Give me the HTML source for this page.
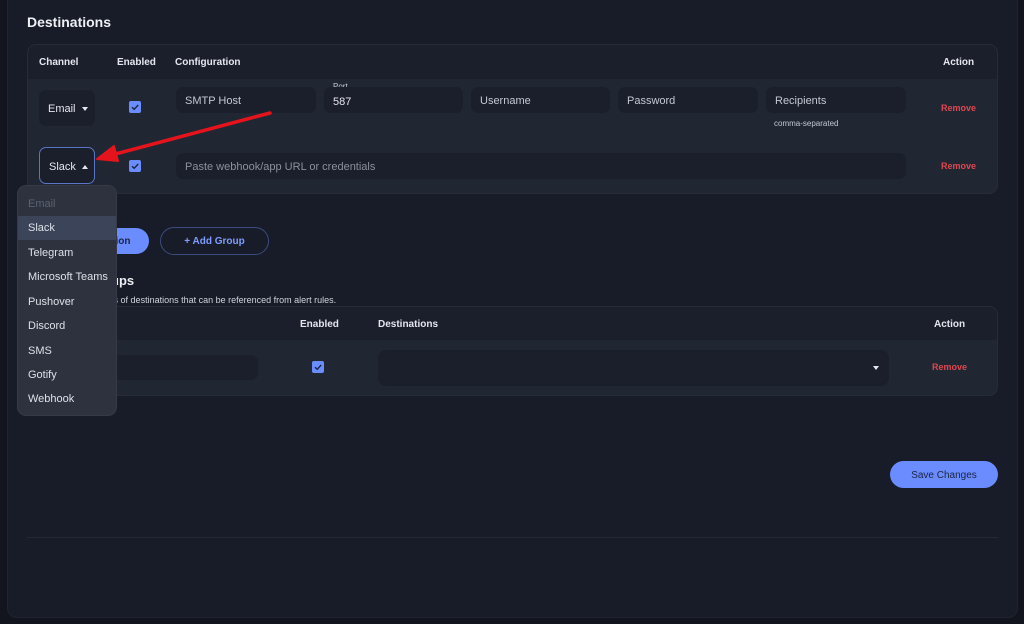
<!DOCTYPE html>
<html><head><meta charset="utf-8"><style>
*{box-sizing:border-box;margin:0;padding:0}
body{width:1024px;height:624px;background:#12151d;font-family:"Liberation Sans",sans-serif;color:#d6dae3;position:relative;overflow:hidden;font-size:11px}
.abs{position:absolute}
.panel{left:7px;top:-12px;width:1011px;height:630px;background:#181c28;border-radius:10px;border:1px solid #1f2430}
.tbl{background:#212633;border-radius:9px;border:1px solid #262b38;overflow:hidden}
.hdr{background:#1b1f2b;position:absolute;left:0;right:0;top:0}
.th{font-weight:bold;font-size:10px;color:#e4e7ee}
.inp{background:#1b1f2b;border-radius:7px;color:#c3c8d3;font-size:11px;padding-left:9px;display:flex;align-items:center;padding-top:2px}
.cb{width:12px;height:12px;background:#6a8cff;border-radius:2px}
.cb svg{display:block}
.rm{color:#e0474f;font-size:9px;font-weight:bold}
.caret{display:inline-block;width:0;height:0;border-left:3.5px solid transparent;border-right:3.5px solid transparent}
.dd{left:17px;top:185px;width:100px;height:231px;background:#2d323e;border-radius:9px;border:1px solid #353a46}
.it{position:absolute;left:0;width:100%;height:24px;line-height:24px;padding-left:10px;font-size:11px;color:#dde1e8}
</style></head><body>
<div class="abs panel"></div>
<div class="abs" style="left:27px;top:14px;font-size:14px;font-weight:bold;color:#eef0f4">Destinations</div>

<div class="abs tbl" style="left:27px;top:44px;width:971px;height:150px">
 <div class="hdr" style="height:34px"></div>
</div>
<div class="abs th" style="left:39px;top:57px">Channel</div>
<div class="abs th" style="left:117px;top:57px">Enabled</div>
<div class="abs th" style="left:175px;top:57px">Configuration</div>
<div class="abs th" style="left:943px;top:57px">Action</div>

<div class="abs inp" style="left:39px;top:90px;width:56px;height:36px;padding-left:9px;color:#e4e7ee">Email&nbsp;&nbsp;<span class="caret" style="border-top:4px solid #e4e7ee"></span></div>
<div class="abs cb" style="left:129px;top:101px"><svg width="12" height="12"><path d="M3 6.2L5.2 8.3 9.2 4" stroke="#1b2440" stroke-width="1.4" fill="none"/></svg></div>
<div class="abs inp" style="left:176px;top:87px;width:140px;height:26px">SMTP Host</div>
<div class="abs" style="left:333px;top:82px;font-size:8px;color:#c3c8d3">Port</div>
<div class="abs inp" style="left:324px;top:87px;width:139px;height:26px;align-items:flex-end;padding-bottom:5px;color:#e4e7ee">587</div>
<div class="abs inp" style="left:471px;top:87px;width:139px;height:26px">Username</div>
<div class="abs inp" style="left:618px;top:87px;width:140px;height:26px">Password</div>
<div class="abs inp" style="left:766px;top:87px;width:140px;height:26px">Recipients</div>
<div class="abs" style="left:774px;top:119px;font-size:8px;color:#c3c8d3">comma-separated</div>
<div class="abs rm" style="left:941px;top:103px">Remove</div>

<div class="abs inp" style="left:39px;top:147px;width:56px;height:37px;border:1px solid #5a75c8;background:#1b1f2b;color:#e4e7ee">Slack&nbsp;&nbsp;<span class="caret" style="border-bottom:4px solid #e4e7ee"></span></div>
<div class="abs cb" style="left:129px;top:160px"><svg width="12" height="12"><path d="M3 6.2L5.2 8.3 9.2 4" stroke="#1b2440" stroke-width="1.4" fill="none"/></svg></div>
<div class="abs inp" style="left:176px;top:153px;width:730px;height:26px;color:#8a909c">Paste webhook/app URL or credentials</div>
<div class="abs rm" style="left:941px;top:161px">Remove</div>

<div class="abs" style="left:27px;top:228px;width:122px;height:26px;background:#6a8cff;border-radius:13px;color:#1b2440;font-weight:bold;font-size:10px;line-height:27px;text-align:center">+ Add Destination</div>
<div class="abs" style="left:160px;top:227px;width:109px;height:28px;border:1px solid #3b4b80;border-radius:14px;color:#7f9cff;font-weight:bold;font-size:10px;line-height:27px;text-align:center">+ Add Group</div>

<div class="abs" style="left:33px;top:273px;font-size:13px;font-weight:bold;color:#eef0f4">Channel Groups</div>
<div class="abs" style="left:24px;top:295px;font-size:9px;color:#d0d4dc">Groups are named sets of destinations that can be referenced from alert rules.</div>

<div class="abs tbl" style="left:27px;top:306px;width:971px;height:90px">
 <div class="hdr" style="height:33px"></div>
</div>
<div class="abs th" style="left:39px;top:319px">Name</div>
<div class="abs th" style="left:300px;top:319px">Enabled</div>
<div class="abs th" style="left:378px;top:319px">Destinations</div>
<div class="abs th" style="left:934px;top:319px">Action</div>
<div class="abs inp" style="left:39px;top:355px;width:219px;height:25px"></div>
<div class="abs cb" style="left:312px;top:361px"><svg width="12" height="12"><path d="M3 6.2L5.2 8.3 9.2 4" stroke="#1b2440" stroke-width="1.4" fill="none"/></svg></div>
<div class="abs inp" style="left:378px;top:350px;width:511px;height:36px;border-radius:8px"></div>
<div class="abs caret" style="left:873px;top:366px;border-top:4px solid #e4e7ee"></div>
<div class="abs rm" style="left:932px;top:362px">Remove</div>

<div class="abs" style="left:890px;top:461px;width:108px;height:27px;background:#6a8cff;border-radius:14px;color:#1b2440;font-size:10px;line-height:29px;text-align:center">Save Changes</div>
<div class="abs" style="left:27px;top:537px;width:971px;height:1px;background:#232836"></div>

<div class="abs dd">
 <div class="it" style="top:6px;color:#5c6270">Email</div>
 <div class="it" style="top:30px;background:#3b4458">Slack</div>
 <div class="it" style="top:55px">Telegram</div>
 <div class="it" style="top:79px">Microsoft Teams</div>
 <div class="it" style="top:104px">Pushover</div>
 <div class="it" style="top:128px">Discord</div>
 <div class="it" style="top:153px">SMS</div>
 <div class="it" style="top:177px">Gotify</div>
 <div class="it" style="top:201px">Webhook</div>
</div>

<svg class="abs" style="left:0;top:0" width="1024" height="624">
 <path d="M270 113 L104 157" stroke="#e5141c" stroke-width="3.5" stroke-linecap="round"/>
 <path d="M97 159 L114 146 L118 161 Z" fill="#e5141c" stroke="#e5141c" stroke-width="2" stroke-linejoin="round"/>
</svg>
</body></html>
